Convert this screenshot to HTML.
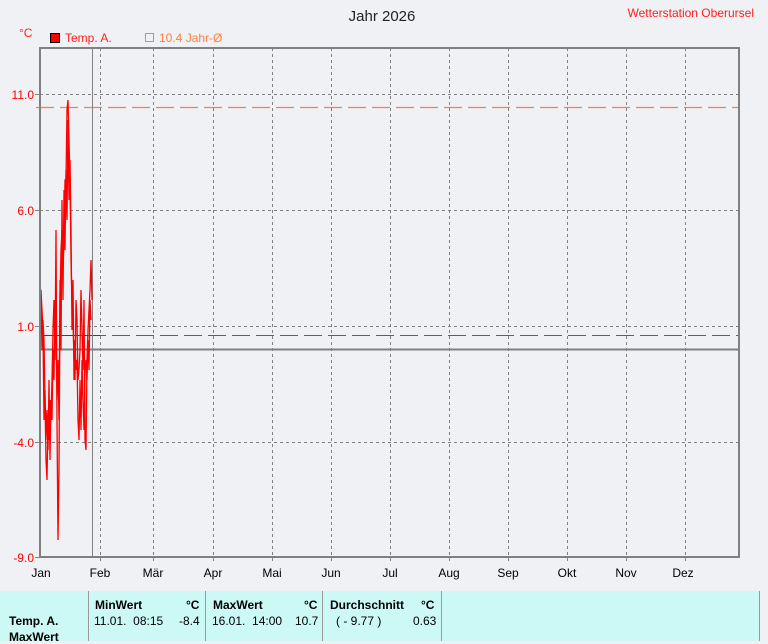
<!DOCTYPE html>
<html><head><meta charset="utf-8"><style>
body{margin:0;width:768px;height:641px;background:#f0f1f4;overflow:hidden;font-family:"Liberation Sans",sans-serif;position:relative}
svg{position:absolute;left:0;top:0}
.panel{position:absolute;left:0;top:591px;width:759px;height:50px;background:#ccf9f6}
.sep{position:absolute;top:591px;width:1px;height:50px;background:#999}
.t{position:absolute;font-size:12px;color:#000;white-space:nowrap}
.b{font-weight:bold}
</style></head><body>
<svg width="768" height="591" font-family="Liberation Sans, sans-serif">
<text x="382" y="21" font-size="15" text-anchor="middle" fill="#222">Jahr 2026</text>
<text x="754" y="17" font-size="12" text-anchor="end" fill="#ff2020">Wetterstation Oberursel</text>
<text x="19" y="37" font-size="12" fill="#ff2020">°C</text>
<rect x="50.5" y="33.5" width="9" height="9" fill="#ff0000" stroke="#000"/>
<text x="65" y="42" font-size="12" fill="#ff2020">Temp. A.</text>
<rect x="145.5" y="33.5" width="8" height="8" fill="none" stroke="#ff8040"/>
<text x="159" y="42" font-size="12" fill="#ff8040">10.4 Jahr-Ø</text>
<g stroke="#808080" stroke-dasharray="3,3" stroke-width="1">
<line x1="40" y1="94.5" x2="740" y2="94.5"/><line x1="40" y1="210.5" x2="740" y2="210.5"/>
<line x1="40" y1="326.5" x2="740" y2="326.5"/><line x1="40" y1="442.5" x2="740" y2="442.5"/>
<line x1="100.5" y1="48" x2="100.5" y2="564"/><line x1="153.5" y1="48" x2="153.5" y2="564"/>
<line x1="213.5" y1="48" x2="213.5" y2="564"/><line x1="272.5" y1="48" x2="272.5" y2="564"/>
<line x1="331.5" y1="48" x2="331.5" y2="564"/><line x1="390.5" y1="48" x2="390.5" y2="564"/>
<line x1="449.5" y1="48" x2="449.5" y2="564"/><line x1="508.5" y1="48" x2="508.5" y2="564"/>
<line x1="567.5" y1="48" x2="567.5" y2="564"/><line x1="626.5" y1="48" x2="626.5" y2="564"/>
<line x1="685.5" y1="48" x2="685.5" y2="564"/>
</g>
<g stroke="#808080"><line x1="35" y1="94.5" x2="40" y2="94.5"/><line x1="35" y1="210.5" x2="40" y2="210.5"/><line x1="35" y1="326.5" x2="40" y2="326.5"/><line x1="35" y1="442.5" x2="40" y2="442.5"/><line x1="35" y1="557.5" x2="40" y2="557.5"/></g>
<line x1="36" y1="107.5" x2="740" y2="107.5" stroke="#ff8040" stroke-width="1.2" stroke-dasharray="18,6"/>
<line x1="40" y1="335.5" x2="740" y2="335.5" stroke="#606060" stroke-dasharray="18,6"/>
<line x1="40" y1="335.5" x2="100" y2="335.5" stroke="#e00000"/>
<line x1="40" y1="349.5" x2="740" y2="349.5" stroke="#808080" stroke-width="2"/>
<line x1="92.5" y1="48" x2="92.5" y2="557" stroke="#808080"/>
<polyline fill="none" stroke="#ff0000" stroke-width="1.3" points="40,280 41,300 42,350 43,320 44,340 45,400 46,460 47,480 48,420 49,440 50,400 51,420 52,380 53,330 54,300 55,360 56,230 57,420 58,540 59,470 60,300 61,250 62,230 63,270 64,240 65,180 66,180 67,110 68,100 69,140 70,180 71,260 72,300 73,320 74,360 75,380 76,300 77,320 78,380 79,370 80,350 81,290 82,330 83,370 84,300 85,440 86,450 87,360 88,330 89,310 90,290 91,260 92,300"/>
<polyline fill="none" stroke="#ff0000" stroke-width="1.3" points="41,290 43,330 44,420 45,390 46,440 47,410 48,450 49,380 50,460 51,400 52,420 53,350 54,380 55,300 56,330 57,400 58,360 59,420 60,280 61,350 62,200 63,300 64,190 65,250 66,170 67,220 68,120 69,200 70,160 71,230 72,330 73,280 74,380 75,340 76,370 77,360 78,420 79,440 80,380 81,430 82,360 83,400 84,430 85,370 86,360 87,380 88,340 89,370 90,300 91,320"/>
<rect x="40" y="48" width="699" height="509" fill="none" stroke="#808080" stroke-width="2"/>
<g font-size="12" fill="#ff0000" text-anchor="end">
<text x="34" y="99">11.0</text><text x="34" y="215">6.0</text><text x="34" y="331">1.0</text><text x="34" y="447">-4.0</text><text x="34" y="562">-9.0</text>
</g>
<g font-size="12" fill="#000" text-anchor="middle">
<text x="41" y="577">Jan</text><text x="100" y="577">Feb</text><text x="153" y="577">Mär</text><text x="213" y="577">Apr</text><text x="272" y="577">Mai</text><text x="331" y="577">Jun</text><text x="390" y="577">Jul</text><text x="449" y="577">Aug</text><text x="508" y="577">Sep</text><text x="567" y="577">Okt</text><text x="626" y="577">Nov</text><text x="683" y="577">Dez</text>
</g>
</svg>
<div class="panel"></div>
<div class="sep" style="left:88px"></div><div class="sep" style="left:205px"></div><div class="sep" style="left:322px"></div><div class="sep" style="left:441px"></div><div class="sep" style="left:759px"></div>
<div class="t b" style="left:9px;top:614px">Temp. A.</div>
<div class="t b" style="left:9px;top:630px">MaxWert</div>
<div class="t b" style="left:95px;top:598px">MinWert</div><div class="t b" style="left:186px;top:598px">°C</div>
<div class="t" style="left:94px;top:614px">11.01.&nbsp; 08:15</div><div class="t" style="left:179px;top:614px">-8.4</div>
<div class="t b" style="left:213px;top:598px">MaxWert</div><div class="t b" style="left:304px;top:598px">°C</div>
<div class="t" style="left:212px;top:614px">16.01.&nbsp; 14:00</div><div class="t" style="left:295px;top:614px">10.7</div>
<div class="t b" style="left:330px;top:598px">Durchschnitt</div><div class="t b" style="left:421px;top:598px">°C</div>
<div class="t" style="left:336px;top:614px">( - 9.77 )</div><div class="t" style="left:413px;top:614px">0.63</div>
</body></html>
